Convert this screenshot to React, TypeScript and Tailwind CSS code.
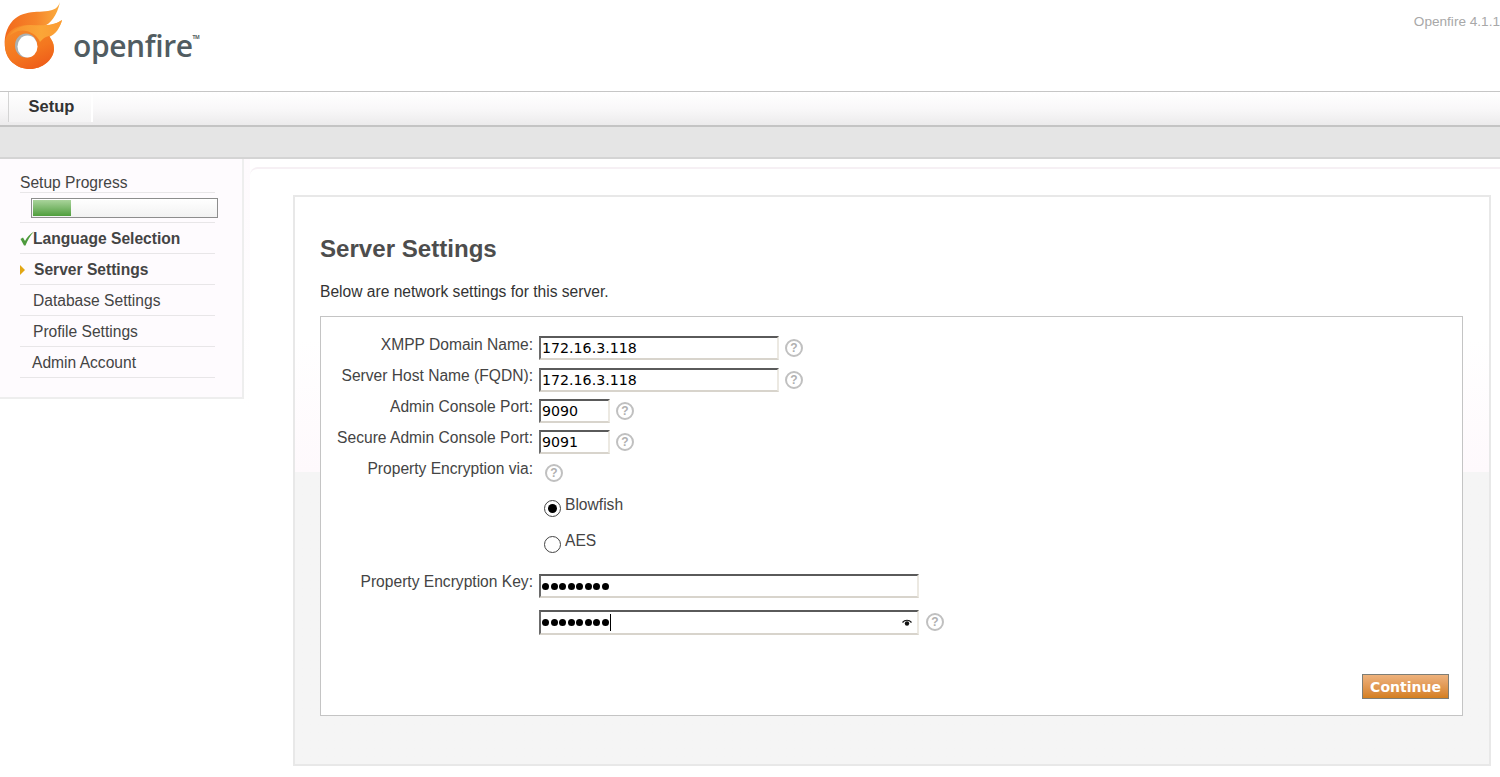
import React from "react";

const sans = { fontFamily: '"Liberation Sans", Arial, sans-serif' };

function Logo() {
  return (
    <svg width="64" height="70" viewBox="0 0 64 70" className="shrink-0">
      <defs>
        <linearGradient id="flame" x1="0" y1="0" x2="1" y2="0">
          <stop offset="0" stopColor="#f2691c" />
          <stop offset="0.55" stopColor="#f6852a" />
          <stop offset="1" stopColor="#fbb142" />
        </linearGradient>
        <linearGradient id="inner" x1="0" y1="0" x2="1" y2="0">
          <stop offset="0" stopColor="#f7902c" />
          <stop offset="0.6" stopColor="#fba637" />
          <stop offset="1" stopColor="#fb9a33" />
        </linearGradient>
        <linearGradient id="ring" x1="0.2" y1="0" x2="0.7" y2="1">
          <stop offset="0" stopColor="#f68a2a" />
          <stop offset="0.6" stopColor="#f4771f" />
          <stop offset="1" stopColor="#ee5c1a" />
        </linearGradient>
      </defs>
      {/* whole silhouette */}
      <path d="M60 2 C58 8 54 10 48 11 C34 13 16 9 7 30 C3 40 4 52 10 60 C16 67 24 69 30 69 C42 69 54 60 54 48 C54 43 52 40 49 37 C56 34 60 28 62 20 C57 24 50 25 44 26 C50 24 57 16 60 2Z" fill="url(#flame)" />
      {/* ring */}
      <path d="M5 44 C5 32 16 25 28 25 C38 25 47 30 51 39 C54 44 54 48 54 50 C53 60 42 69 30 69 C24 69 16 67 10 60 C6 55 5 50 5 44Z" fill="url(#ring)" />
      {/* front flame */}
      <path d="M9 36 C13 29 22 25 30 25 C40 25 52 27 62 20 C60 28 54 35 46 37 C43 38 42 40 40 42 C36 33 26 29 18 31 C15 32 11 34 9 36Z" fill="url(#inner)" />
      {/* hole */}
      <ellipse cx="26" cy="45.5" rx="11" ry="12" fill="#aab0b2" />
      <ellipse cx="27.5" cy="46.5" rx="10" ry="11" fill="#fff" />
    </svg>
  );
}

function Help({ className = "" }: { className?: string }) {
  return (
    <span
      className={`flex h-[18px] w-[18px] shrink-0 items-center justify-center rounded-full border-2 border-[#c0c0c0] bg-white text-[12px] font-bold leading-none text-[#b0b0b0] ${className}`}
    >
      ?
    </span>
  );
}

function Field({ value, width, password, eye, focus }: { value: string; width: string; password?: boolean; eye?: boolean; focus?: boolean }) {
  return (
    <div
      className={`flex items-center border-2 border-b-[#d8d4cc] border-l-[#6b6b6b] border-r-[#ece9e2] border-t-[#5a5a5a] bg-white pl-px text-[14.2px] text-black ${width}`}
      style={{ fontFamily: password ? '"Liberation Sans", sans-serif' : '"DejaVu Sans", Verdana, sans-serif' }}
    >
      {password ? (
        <span className="flex gap-[1.5px]">
          {Array.from({ length: 8 }).map((_, i) => (
            <span key={i} className="h-[7px] w-[7px] rounded-full bg-black" />
          ))}
        </span>
      ) : (
        <span className="pt-px">{value}</span>
      )}
      {focus && <span className="ml-px h-[17px] w-px bg-black" />}
      {eye && (
        <svg width="10" height="8" viewBox="0 0 10 8" className="ml-auto mr-[5px]">
          <path d="M0.5 3.5 C3 0.5 7 0.5 9.5 3.5" fill="none" stroke="#111" strokeWidth="1.2" />
          <circle cx="5" cy="4.5" r="2.2" fill="#111" />
        </svg>
      )}
    </div>
  );
}

function Label({ children }: { children: React.ReactNode }) {
  return <div className="w-[218px] shrink-0 pr-[6px] text-right text-[15.6px] leading-[18px] text-[#444]">{children}</div>;
}

function Radio({ checked }: { checked?: boolean }) {
  return (
    <span className="flex h-[17px] w-[17px] items-center justify-center rounded-full border border-[#444] bg-white">
      {checked && <span className="h-[9px] w-[9px] rounded-full bg-black" />}
    </span>
  );
}

function SideRow({ children }: { children: React.ReactNode }) {
  return <div className="flex h-[31px] items-center border-b border-[#e8e6e8] pt-[1px] text-[15.6px] text-[#444]">{children}</div>;
}

export default function App() {
  return (
    <div className="h-[777px] w-[1500px] overflow-hidden bg-white" style={sans}>
      {/* header */}
      <div className="flex h-[91px] justify-between">
        <div className="flex">
          <Logo />
          <div
            className="ml-[9px] mt-[26px] flex items-start text-[30px] font-semibold leading-[40px] tracking-[-0.4px] text-[#515c61]"
            style={{ fontFamily: '"Open Sans", sans-serif' }}
          >
            openfire
            <span className="mt-[9px] text-[5px] font-bold leading-none">TM</span>
          </div>
        </div>
        <div className="pt-[12px] text-[13.6px] text-[#a8a8a8]">Openfire 4.1.1</div>
      </div>

      {/* nav */}
      <div className="flex h-[36px] border-b-2 border-t border-b-[#c4c4c4] border-t-[#c6c6c6] bg-gradient-to-b from-white via-[#f9f8f9] to-[#ecebec] pl-[8px]">
        <div className="flex h-[30px] w-[85px] items-center justify-center border-l border-r-2 border-l-[#d4d4d4] border-r-white bg-gradient-to-b from-white to-[#f4f3f4] pb-[2px] pl-[3px] text-[16.5px] font-bold text-[#333]">
          Setup
        </div>
      </div>

      {/* sub bar */}
      <div className="h-[32px] border-b-2 border-[#d4d4d4] bg-[#e5e5e5]" />

      <div className="flex">
        {/* sidebar */}
        <div className="h-[240px] w-[244px] shrink-0 border-b-2 border-r-2 border-[#eeeeee] bg-[#fefbfe] pl-[20px] pr-[27px]">
          <div className="flex h-[34px] items-end border-b border-[#e8e6e8] text-[15.6px] leading-[18px] text-[#444]">Setup Progress</div>
          <div className="flex h-[30px] items-center border-b border-[#e8e6e8] pl-[11px]">
            <div className="-mr-[3px] h-[20px] w-[187px] shrink-0 border border-[#8d8d8d] bg-gradient-to-b from-white to-[#f2f2f2] p-px">
              <div className="h-full w-[38px] bg-gradient-to-b from-[#a9d49b] to-[#4f9e3c]" />
            </div>
          </div>
          <SideRow>
            <svg width="14" height="15" viewBox="0 0 14 15" className="shrink-0">
              <path d="M0.5 8 L3 6.5 L5 10 C7 6 10 3 14 0.5 C10 5 7.5 9 5.5 14.5 L4 14.5Z" fill="#4e9a3d" />
            </svg>
            <span className="-ml-px font-bold">Language Selection</span>
          </SideRow>
          <SideRow>
            <span className="h-0 w-0 border-y-[5px] border-l-[5px] border-y-transparent border-l-[#e2a714]" />
            <span className="ml-[9px] font-bold">Server Settings</span>
          </SideRow>
          <SideRow><span className="pl-[13px]">Database Settings</span></SideRow>
          <SideRow><span className="pl-[13px]">Profile Settings</span></SideRow>
          <SideRow><span className="pl-[12px]">Admin Account</span></SideRow>
        </div>
        {/* pale strip beside the sidebar */}
        <div className="h-[250px] w-[6px] shrink-0 bg-gradient-to-b from-[#fefafd] to-white" />

        {/* content */}
        <div className="mt-[8px] flex-1 rounded-tl-[8px] border-t-2 border-[#f6f0f4] bg-white pl-[43px] pt-[26px]">
          <div className="h-[571px] w-[1198px] border-2 border-[#e8e8e8] bg-gradient-to-b from-white from-[25%] via-[#fef9fc] via-[48.5%] to-[#f5f5f5] to-[48.5%] pl-[25px] pt-[38px]">
            <h1 className="text-[24.1px] font-bold leading-[28px] text-[#4d4d4d]">Server Settings</h1>
            <p className="mt-[20px] text-[15.6px] leading-[18px] text-[#333]">Below are network settings for this server.</p>

            <div className="mt-[15px] flex h-[400px] w-[1143px] flex-col border border-[#c4c4c4] bg-white pt-[19px]">
              <div className="flex h-[31px]">
                <Label>XMPP Domain Name:</Label>
                <Field value="172.16.3.118" width="h-[24px] w-[240px]" />
                <Help className="ml-[6px] mt-[3px]" />
              </div>
              <div className="flex h-[31px]">
                <Label>Server Host Name (FQDN):</Label>
                <div className="flex pt-px">
                  <Field value="172.16.3.118" width="h-[24px] w-[240px]" />
                  <Help className="ml-[6px] mt-[3px]" />
                </div>
              </div>
              <div className="flex h-[31px]">
                <Label>Admin Console Port:</Label>
                <div className="flex pt-px">
                  <Field value="9090" width="h-[24px] w-[71px]" />
                  <Help className="ml-[6px] mt-[3px]" />
                </div>
              </div>
              <div className="flex h-[31px]">
                <Label>Secure Admin Console Port:</Label>
                <div className="flex pt-px">
                  <Field value="9091" width="h-[24px] w-[71px]" />
                  <Help className="ml-[6px] mt-[3px]" />
                </div>
              </div>
              <div className="flex h-[36px]">
                <Label>Property Encryption via:</Label>
                <Help className="ml-[6px] mt-[4px]" />
              </div>
              <div className="flex h-[36px] items-start pl-[223px] text-[15.6px] leading-[18px] text-[#444]">
                <span className="mt-[4px]"><Radio checked /></span>
                <span className="ml-[4px]">Blowfish</span>
              </div>
              <div className="flex h-[41px] items-start pl-[223px] text-[15.6px] leading-[18px] text-[#444]">
                <span className="mt-[4px]"><Radio /></span>
                <span className="ml-[4px]">AES</span>
              </div>
              <div className="flex h-[36px]">
                <Label>Property Encryption Key:</Label>
                <div className="pt-px">
                  <Field value="" password width="h-[24px] w-[380px]" />
                </div>
              </div>
              <div className="flex pt-px">
                <div className="w-[218px] shrink-0" />
                <Field value="" password eye focus width="h-[25px] w-[380px]" />
                <Help className="ml-[7px] mt-[3px]" />
              </div>
              <div className="mr-[13px] mt-[39px] flex justify-end">
                <button
                  className="h-[25px] w-[87px] border border-[#7e7e76] bg-gradient-to-b from-[#eeb27c] to-[#d47f1e] pt-[2px] text-[14px] font-bold text-white"
                  style={{ fontFamily: '"DejaVu Sans", Verdana, sans-serif' }}
                >
                  Continue
                </button>
              </div>
            </div>
          </div>
        </div>
      </div>
    </div>
  );
}
